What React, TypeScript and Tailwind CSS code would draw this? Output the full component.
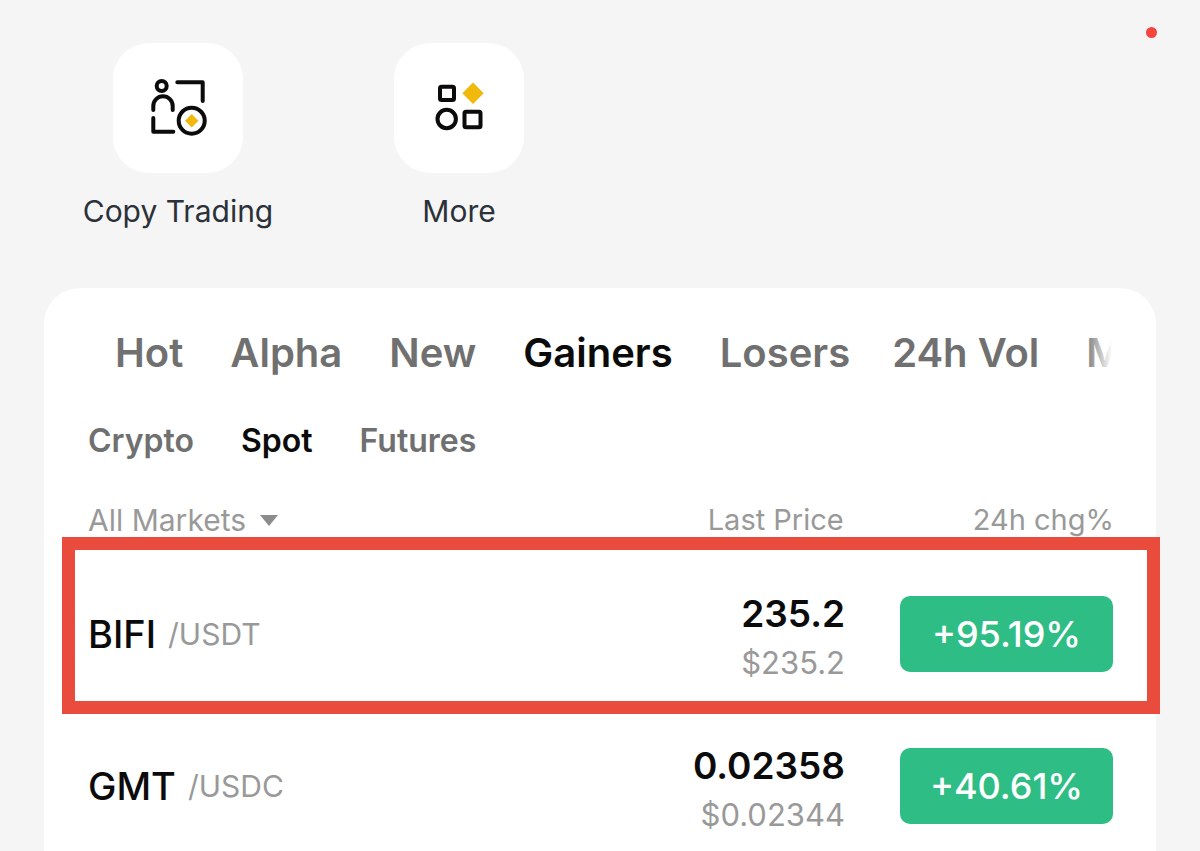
import type { ReactNode } from 'react';

const font = { fontFamily: '"Inter", "Liberation Sans", sans-serif' };

const mainTabs = ['Hot', 'Alpha', 'New', 'Gainers', 'Losers', '24h Vol', 'Market Cap'];
const subTabs = ['Crypto', 'Spot', 'Futures'];
const rows = [
  { base: 'BIFI', quote: '/USDT', price: '235.2', fiat: '$235.2', change: '+95.19%' },
  { base: 'GMT', quote: '/USDC', price: '0.02358', fiat: '$0.02344', change: '+40.61%' },
];

function CopyIcon() {
  return (
    <svg width="130" height="130" viewBox="113 43 130 130" fill="none" stroke="#0b0b0b" strokeWidth="4" strokeLinecap="round" strokeLinejoin="round">
      <circle cx="161.700" cy="86" r="5" />
      <path d="M153.300 110v-4a9.700 9.700 0 0 1 19.400 0v4" />
      <path d="M153.300 118v13.700h20" />
      <path d="M177.300 82.300h25.400v18.700" />
      <circle cx="191.700" cy="120.700" r="13" />
      <path d="M191.700 114l6.700 6.700-6.700 6.700-6.700-6.700z" fill="#f0b90b" stroke="none" />
    </svg>
  );
}

function MoreIcon() {
  return (
    <svg width="130" height="130" viewBox="394 43 130 130" fill="none" stroke="#0b0b0b" strokeWidth="4" strokeLinejoin="round">
      <rect x="440" y="86.800" width="14" height="13.200" rx="1.500" />
      <circle cx="446.700" cy="119" r="9.200" />
      <rect x="464.500" y="111.800" width="16" height="15.500" rx="1.500" />
      <path d="M473 82.600l10.700 10.700-10.700 10.700-10.700-10.700z" fill="#f0b90b" stroke="none" />
    </svg>
  );
}

function Shortcut({ label, icon, width }: { label: string; icon: ReactNode; width: string }) {
  return (
    <div className={`flex flex-col items-center ${width}`}>
      <div className="h-[130px] w-[130px] rounded-[36px] bg-white">{icon}</div>
      <div className="mt-[18px] whitespace-nowrap text-[30px] leading-[40px] text-[#2b3139]">{label}</div>
    </div>
  );
}

export default function App() {
  return (
    <div className="relative h-[851px] w-[1200px] overflow-hidden bg-[#f5f5f5]" style={font}>
      <div className="absolute left-[1146px] top-[27px] h-[11px] w-[11px] rounded-full bg-[#f6443f]" />

      <div className="flex gap-[81px] pl-[78px] pt-[43px]">
        <Shortcut label="Copy Trading" width="w-[200px]" icon={<CopyIcon />} />
        <Shortcut label="More" width="w-[200px]" icon={<MoreIcon />} />
      </div>

      <div className="mx-[44px] mt-[57px] h-[600px] rounded-t-[36px] bg-white px-[44px]">
        <div className="relative overflow-hidden pl-[27px] pt-[38px]">
          <div className="flex gap-[47px] whitespace-nowrap text-[40px] font-semibold leading-[54px] text-[#707070]">
            {mainTabs.map((tab) => (
              <span
                key={tab}
                className={tab === 'Gainers' ? 'text-[#0b0b0b]' : tab === 'Losers' ? 'mr-[-5px]' : ''}
              >
                {tab}
              </span>
            ))}
          </div>
          <div className="absolute bottom-0 right-0 top-0 w-[28px] bg-gradient-to-r from-white/0 to-white" />
        </div>

        <div className="mt-[38px] flex gap-[47px] text-[32px] font-semibold leading-[46px] text-[#707070]">
          {subTabs.map((tab) => (
            <span key={tab} className={tab === 'Spot' ? 'text-[#0b0b0b]' : ''}>
              {tab}
            </span>
          ))}
        </div>

        <div className="mt-[36px] flex h-[40px] items-center justify-between text-[29px] text-[#999]">
          <div className="flex items-center gap-[14px] text-[30px]">
            All Markets
            <span className="h-0 w-0 border-x-[9px] border-t-[11px] border-x-transparent border-t-[#8c8c8c]" />
          </div>
          <div className="mr-[-2px] flex items-center gap-[129px]">
            <span>Last Price</span>
            <span>24h chg%</span>
          </div>
        </div>

        <div className="mt-[18px]">
          {rows.map((row) => (
            <div key={row.base} className="flex h-[152px] items-center justify-between">
              <div className="flex items-center gap-[12px]">
                <span className="text-[38px] font-medium text-[#0b0b0b]">{row.base}</span>
                <span className="text-[30px] text-[#999]">{row.quote}</span>
              </div>
              <div className="-mr-px flex items-center gap-[55px]">
                <div className="pt-[4px] text-right">
                  <div className="text-[37px] font-semibold leading-[48px] text-[#0b0b0b]">{row.price}</div>
                  <div className="mt-[5px] text-[31px] leading-[40px] text-[#999]">{row.fiat}</div>
                </div>
                <div className="flex h-[76px] w-[213px] items-center justify-center rounded-[10px] bg-[#2ebd85] text-[36px] font-medium text-white">
                  {row.change}
                </div>
              </div>
            </div>
          ))}
        </div>
      </div>

      <div className="absolute left-[62px] top-[537px] h-[177px] w-[1098px] border-[13px] border-[#e94c3d]" />
    </div>
  );
}
